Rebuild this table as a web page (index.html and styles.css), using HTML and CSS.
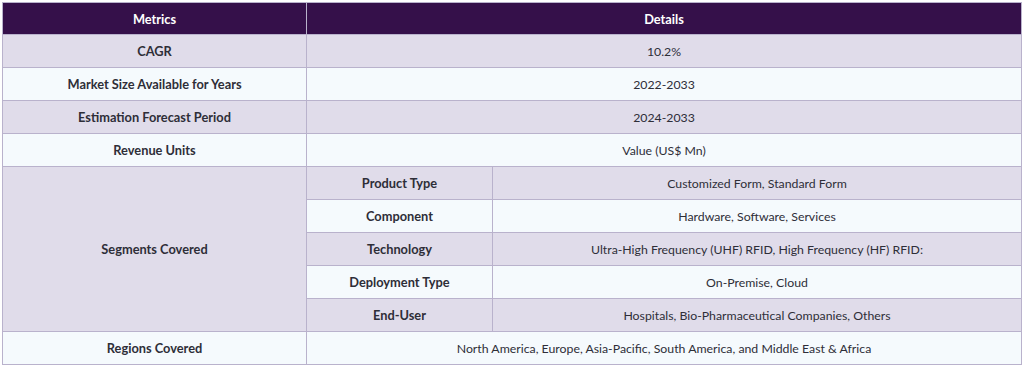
FILE: index.html
```html
<!DOCTYPE html>
<html lang="en">
<head>
    <meta charset="UTF-8">
    <title>Report Scope</title>
    <link rel="stylesheet" href="styles.css">
</head>
<body>
    <table class="scope-table">
        <colgroup>
            <col class="col-metric">
            <col class="col-sub">
            <col class="col-value">
        </colgroup>
        <thead>
            <tr>
                <th>Metrics</th>
                <th colspan="2">Details</th>
            </tr>
        </thead>
        <tbody>
            <tr class="shade">
                <td class="label">CAGR</td>
                <td colspan="2">10.2%</td>
            </tr>
            <tr class="light">
                <td class="label">Market Size Available for Years</td>
                <td colspan="2">2022-2033</td>
            </tr>
            <tr class="shade">
                <td class="label">Estimation Forecast Period</td>
                <td colspan="2">2024-2033</td>
            </tr>
            <tr class="light">
                <td class="label">Revenue Units</td>
                <td colspan="2">Value (US$ Mn)</td>
            </tr>
            <tr class="shade">
                <td class="label" rowspan="5">Segments Covered</td>
                <td class="label">Product Type</td>
                <td>Customized Form, Standard Form</td>
            </tr>
            <tr class="light">
                <td class="label">Component</td>
                <td>Hardware, Software, Services</td>
            </tr>
            <tr class="shade">
                <td class="label">Technology</td>
                <td>Ultra-High Frequency (UHF) RFID, High Frequency (HF) RFID:</td>
            </tr>
            <tr class="light">
                <td class="label">Deployment Type</td>
                <td>On-Premise, Cloud</td>
            </tr>
            <tr class="shade">
                <td class="label">End-User</td>
                <td>Hospitals, Bio-Pharmaceutical Companies, Others</td>
            </tr>
            <tr class="light">
                <td class="label">Regions Covered</td>
                <td colspan="2">North America, Europe, Asia-Pacific, South America, and Middle East &amp; Africa</td>
            </tr>
        </tbody>
    </table>
</body>
</html>
```

FILE: styles.css
```css
body {
    margin: 0;
    padding: 2px;
    background: #fff;
    font-family: Lato, "Open Sans", sans-serif;
    font-size: 12.3px;
    color: #2e2e38;
}
.scope-table {
    width: 1020px;
    border-collapse: collapse;
    table-layout: fixed;
}
.col-metric {
    width: 304px;
}
.col-sub {
    width: 186px;
}
.scope-table th,
.scope-table td {
    height: 32px;
    padding: 0 8px;
    border: 1px solid #b9b2cc;
    text-align: center;
    vertical-align: middle;
}
.scope-table th {
    height: 31px;
    background: #35104a;
    color: #fff;
    font-size: 12.8px;
    font-weight: 700;
}
.scope-table .label {
    font-size: 12.8px;
    font-weight: 700;
}
.shade td {
    background: #e0dcea;
}
.light td {
    background: #f5fafd;
}
```
